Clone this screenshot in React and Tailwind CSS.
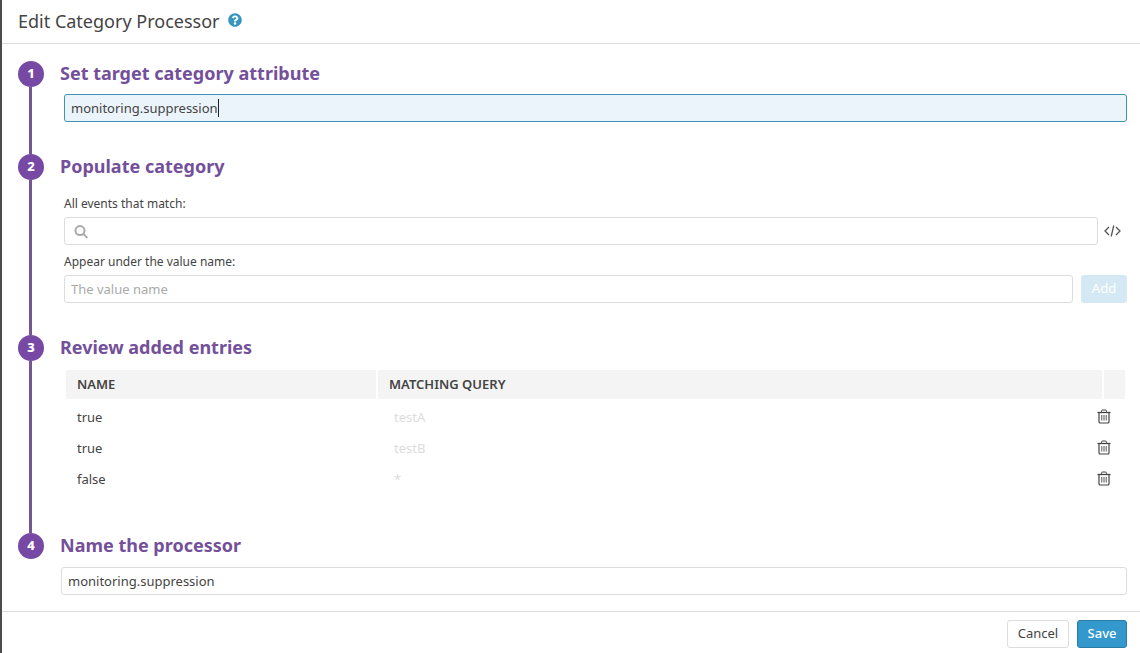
import { useLayoutEffect, useRef, useState } from 'react'
import { FaQuestionCircle } from 'react-icons/fa'

const INITIAL_ENTRIES = [
  { id: 1, name: 'true', query: 'testA' },
  { id: 2, name: 'true', query: 'testB' },
  { id: 3, name: 'false', query: '*' },
]

const inputBase =
  'block h-7 w-full rounded-[3px] border px-1.5 text-[13px] text-[#444] outline-none placeholder:text-[#aaa]'

function TrashIcon() {
  return (
    <svg width="14" height="16" viewBox="0 0 14 16" fill="none" stroke="#444" aria-hidden="true">
      <path d="M0.5 3.5H13.5" strokeWidth="1.3" />
      <path d="M4.5 3.3V2.2Q4.5 1 5.6 1H8.4Q9.5 1 9.5 2.2V3.3" />
      <path d="M2 3.5V12.7Q2 14 3.3 14H10.7Q12 14 12 12.7V3.5" strokeWidth="1.2" />
      <path d="M4.8 6V11.5M7 6V11.5M9.2 6V11.5" strokeWidth="0.9" />
    </svg>
  )
}

function CodeIcon() {
  return (
    <svg width="17" height="12" viewBox="0 0 17 12" fill="none" stroke="#555" strokeWidth="1.3" aria-hidden="true">
      <path d="M5 2L1 6L5 10M12 2L16 6L12 10M9.8 0.5L7.2 11.5" />
    </svg>
  )
}

function SearchIcon() {
  return (
    <svg
      width="14"
      height="14"
      viewBox="0 0 14 14"
      fill="none"
      stroke="#aaa"
      strokeWidth="2"
      strokeLinecap="round"
      className="absolute top-2 left-[10px]"
      aria-hidden="true"
    >
      <circle cx="6" cy="5.6" r="4.5" />
      <path d="M9.5 9.1L12.8 12.4" />
    </svg>
  )
}

// text input that draws its own caret after the last character
function CaretInput({ value, onChange, ...props }) {
  const ref = useRef(null)
  const [caretX, setCaretX] = useState(0)

  useLayoutEffect(() => {
    const ctx = document.createElement('canvas').getContext('2d')
    const style = getComputedStyle(ref.current)
    ctx.font = `${style.fontSize} ${style.fontFamily}`
    setCaretX(Math.ceil(ctx.measureText(value).width) + 7)
  }, [value])

  return (
    <div className="relative">
      <input
        ref={ref}
        className={`${inputBase} border-[#3b93b8] bg-[#ebf4fb] caret-transparent`}
        value={value}
        onChange={e => onChange(e.target.value)}
        {...props}
      />
      <span className="pointer-events-none absolute top-[5px] h-[18px] w-px bg-[#222]" style={{ left: caretX }} />
    </div>
  )
}

function Step({ number, title, last, className, children }) {
  return (
    <li className="flex gap-4">
      <div className="flex w-[26px] shrink-0 flex-col">
        <span className="flex h-[26px] w-[26px] items-center justify-center rounded-full bg-[#7849a4] text-[13px] font-extrabold text-white">
          {number}
        </span>
        {!last && <span className="ml-[11px] w-[3px] flex-1 bg-[#765591]" />}
      </div>
      <div className={`min-w-0 flex-1 ${className}`}>
        <h2 className="pb-0.5 text-lg leading-6 font-bold text-[#74509a]">{title}</h2>
        {children}
      </div>
    </li>
  )
}

export default function App() {
  const [attribute, setAttribute] = useState('monitoring.suppression')
  const [match, setMatch] = useState('')
  const [valueName, setValueName] = useState('')
  const [entries, setEntries] = useState(INITIAL_ENTRIES)
  const [processor, setProcessor] = useState('monitoring.suppression')

  function addEntry() {
    setEntries(prev => [...prev, { id: Date.now(), name: valueName, query: match }])
    setValueName('')
    setMatch('')
  }

  return (
    <div className="min-h-screen border-l-2 border-[#4b4b4b] bg-white font-['Noto_Sans','Open_Sans',sans-serif] text-[13px] text-[#444]">
      <header className="flex h-11 items-center gap-2 border-b border-[#ddd] pb-0.5 pl-4">
        <h1 className="text-lg leading-6 text-[#444]">Edit Category Processor</h1>
        <button type="button" aria-label="Help" className="pb-0.5 text-[#3795c0]">
          <FaQuestionCircle size={14} />
        </button>
      </header>

      <ol className="pt-[17px] pr-[13px] pb-4 pl-4">
        <Step number={1} title="Set target category attribute" className="pb-8">
          <div className="pt-[7px] pl-1">
            <CaretInput aria-label="Target category attribute" value={attribute} onChange={setAttribute} />
          </div>
        </Step>

        <Step number={2} title="Populate category" className="pb-8">
          <div className="pt-[14px] pl-1">
            <label htmlFor="match" className="block text-xs leading-5">All events that match:</label>
            <div className="mt-[3px] flex items-center">
              <div className="relative flex-1">
                <SearchIcon />
                <input
                  id="match"
                  className={`${inputBase} border-[#ddd] pl-8`}
                  value={match}
                  onChange={e => setMatch(e.target.value)}
                />
              </div>
              <button type="button" aria-label="Edit as code" className="flex w-[29px] justify-center">
                <CodeIcon />
              </button>
            </div>
            <label htmlFor="value-name" className="mt-[7px] block text-xs leading-5">Appear under the value name:</label>
            <div className="mt-[3px] flex gap-2">
              <input
                id="value-name"
                className={`${inputBase} flex-1 border-[#ddd]`}
                placeholder="The value name"
                value={valueName}
                onChange={e => setValueName(e.target.value)}
              />
              <button
                type="button"
                disabled={!match || !valueName}
                onClick={addEntry}
                className="h-7 w-[46px] rounded-[3px] bg-[#3399cc] text-[13px] text-white disabled:bg-[#d4e9f3]"
              >
                Add
              </button>
            </div>
          </div>
        </Step>

        <Step number={3} title="Review added entries" className="pb-[39px]">
          <div className="pt-[7px] pl-1">
            <table className="w-full table-fixed border-separate border-spacing-[2px] text-left">
              <colgroup>
                <col className="w-[310px]" />
                <col />
                <col className="w-[21px]" />
              </colgroup>
              <thead>
                <tr className="h-[29px]">
                  <th className="bg-[#f4f4f4] px-[11px] font-semibold">NAME</th>
                  <th className="bg-[#f4f4f4] px-[11px] font-semibold">MATCHING QUERY</th>
                  <td className="bg-[#f4f4f4]" />
                </tr>
              </thead>
              <tbody>
                {entries.map(entry => (
                  <tr key={entry.id}>
                    <td className="px-[11px] pt-1.5 pb-[3px] leading-5">{entry.name}</td>
                    <td colSpan={2} className="pt-1.5 pr-[14px] pb-[3px] pl-4 leading-5">
                      <div className="flex items-center justify-between text-[#ddd]">
                        {entry.query}
                        <button
                          type="button"
                          aria-label={`Delete ${entry.query}`}
                          onClick={() => setEntries(prev => prev.filter(e => e.id !== entry.id))}
                        >
                          <TrashIcon />
                        </button>
                      </div>
                    </td>
                  </tr>
                ))}
              </tbody>
            </table>
          </div>
        </Step>

        <Step number={4} title="Name the processor" last>
          <div className="pt-2 pl-px">
            <input
              aria-label="Processor name"
              className={`${inputBase} border-[#ddd]`}
              value={processor}
              onChange={e => setProcessor(e.target.value)}
            />
          </div>
        </Step>
      </ol>

      <footer className="flex justify-end gap-2 border-t border-[#ddd] pt-2 pr-[13px] pb-[5px]">
        <button type="button" className="h-7 w-[62px] rounded-[3px] border border-[#ddd] bg-white text-[13px]">
          Cancel
        </button>
        <button type="button" className="h-7 w-[50px] rounded-[3px] border border-[#2a7ca8] bg-[#3399cc] text-[13px] font-medium text-white">
          Save
        </button>
      </footer>
    </div>
  )
}
